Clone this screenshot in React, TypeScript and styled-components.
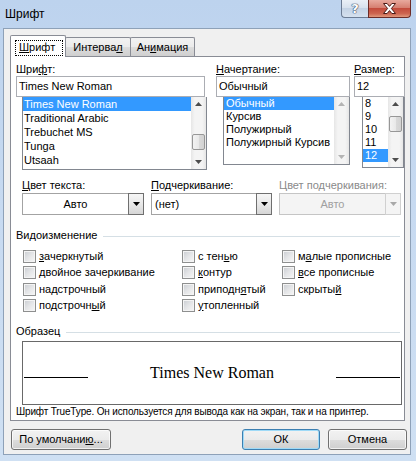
import styled, { createGlobalStyle } from "styled-components";

const GlobalStyle = createGlobalStyle`
  html, body {
    margin: 0;
    padding: 0;
  }
  body {
    font-family: "Liberation Sans", Arial, sans-serif;
    font-size: 11px;
    color: #000;
  }
  * {
    box-sizing: border-box;
  }
`;

const Window = styled.div`
  width: 416px;
  height: 461px;
  display: flex;
  flex-direction: column;
  overflow: hidden;
  background: linear-gradient(180deg, #bdd3ee 0%, #c7daf1 45%, #cfe0f3 100%);
`;

const TitleBar = styled.div`
  height: 28px;
  flex-shrink: 0;
  display: flex;
  align-items: flex-start;
`;

const Title = styled.div`
  flex: 1;
  padding-left: 5px;
  font-size: 12px;
  line-height: 28px;
`;

const CaptionButtons = styled.div`
  display: flex;
  margin-right: 5px;
`;

const HelpButton = styled.div`
  width: 27px;
  height: 18px;
  border: 1px solid #6b7c94;
  border-top: none;
  border-right: none;
  border-radius: 0 0 0 4px;
  background: linear-gradient(180deg, #eaf0f7 0%, #d8e2ee 45%, #c4d3e5 50%, #d5e1ef 100%);
  display: flex;
  align-items: center;
  justify-content: center;
  font: bold 13px "DejaVu Sans", sans-serif;
  color: #fff;
  text-shadow: 0 0 1px #2b3c58, 0 0 1px #2b3c58, 0 0 1px #2b3c58;
`;

const CloseButton = styled.div`
  width: 43px;
  height: 18px;
  border: 1px solid #6c2c27;
  border-top: none;
  border-radius: 0 0 4px 0;
  background: linear-gradient(180deg, #e8a99e 0%, #d67f71 45%, #c34b3c 50%, #cd6550 80%, #e0987c 100%);
  display: flex;
  align-items: center;
  justify-content: center;
`;

const Body = styled.div`
  flex: 1;
  margin: 0 5px 6px 3px;
  border: 1px solid #8ea1b8;
  background: #f0f0f0;
  display: flex;
  flex-direction: column;
  padding-top: 6px;
`;

const TabStrip = styled.div`
  height: 22px;
  margin: 0 5px 0 6px;
  display: flex;
  align-items: flex-end;
  position: relative;
  z-index: 1;
`;

const Tab = styled.div<{ $active?: boolean; $width: number }>`
  width: ${(p) => p.$width}px;
  margin-left: ${(p) => (p.$active ? 0 : -1)}px;
  border: 1px solid #898c95;
  border-bottom: none;
  border-radius: 2px 2px 0 0;
  display: flex;
  ${(p) =>
    p.$active
      ? `
    height: 22px;
    background: #fff;
    padding: 4px 2px 1px 4px;
  `
      : `
    height: 19px;
    margin-bottom: 1px;
    background: linear-gradient(180deg, #f2f2f2 0%, #ebebeb 50%, #dddddd 51%, #cfcfcf 100%);
    justify-content: center;
    line-height: 18px;
  `}
`;

const FocusRect = styled.span`
  flex: 1;
  border: 1px dotted #000;
  padding-left: 3px;
  line-height: 13px;
`;

const U = styled.span`
  text-decoration: underline;
`;

const Panel = styled.div`
  margin: -1px 5px 0 6px;
  height: 365px;
  border: 1px solid #898c95;
  background: #fff;
  padding: 6px 1px 0 5px;
  display: flex;
  flex-direction: column;
`;

const TopSection = styled.div`
  display: flex;
  align-items: flex-start;
  height: 107px;
`;

const Column = styled.div<{ $width: number; $offset?: number }>`
  width: ${(p) => p.$width}px;
  margin-left: ${(p) => p.$offset ?? 0}px;
  flex-shrink: 0;
  display: flex;
  flex-direction: column;
`;

const FieldLabel = styled.div<{ $disabled?: boolean }>`
  line-height: 13px;
  height: 13px;
  white-space: nowrap;
  color: ${(p) => (p.$disabled ? "#8a8a8a" : "#000")};
`;

const TextBox = styled.div<{ $width: number }>`
  width: ${(p) => p.$width}px;
  height: 21px;
  border: 1px solid #abadb3;
  padding-left: 2px;
  line-height: 19px;
  background: #fff;
`;

const ListBox = styled.div<{ $width: number; $height: number; $indent: number }>`
  width: ${(p) => p.$width}px;
  height: ${(p) => p.$height}px;
  margin-left: ${(p) => p.$indent}px;
  border: 1px solid #828790;
  border-top: none;
  background: #fff;
  display: flex;
  overflow: hidden;
`;

const ListItems = styled.div`
  flex: 1;
  display: flex;
  flex-direction: column;
  overflow: hidden;
`;

const ListItem = styled.div<{ $selected?: boolean; $h: number; $pad: number }>`
  height: ${(p) => p.$h}px;
  line-height: ${(p) => p.$h}px;
  padding-left: ${(p) => p.$pad}px;
  white-space: nowrap;
  flex-shrink: 0;
  background: ${(p) => (p.$selected ? "#3399ff" : "transparent")};
  color: ${(p) => (p.$selected ? "#fff" : "#000")};
`;

const ScrollBar = styled.div`
  width: 15px;
  display: flex;
  flex-direction: column;
  background: linear-gradient(90deg, #e6e6e6 0%, #f4f4f4 25%, #f4f4f4 75%, #e6e6e6 100%);
`;

const ScrollArrow = styled.div<{ $disabled?: boolean }>`
  height: 14px;
  display: flex;
  align-items: center;
  justify-content: center;
  color: ${(p) => (p.$disabled ? "#b4b4b4" : "#4d4d4d")};
`;

const ScrollTrack = styled.div`
  flex: 1;
  display: flex;
  flex-direction: column;
`;

const ScrollThumb = styled.div<{ $offset: number }>`
  margin: ${(p) => p.$offset}px 1px 0 1px;
  height: 16px;
  border: 1px solid #979797;
  border-radius: 2px;
  background: linear-gradient(90deg, #f3f3f3 0%, #e9e9e9 50%, #dadada 51%, #d2d2d2 100%);
`;

const ComboRow = styled.div`
  display: flex;
  gap: 7px;
  margin-top: 9px;
  padding-left: 6px;
`;

const ComboField = styled.div<{ $width: number }>`
  width: ${(p) => p.$width}px;
  display: flex;
  flex-direction: column;
  gap: 1px;
`;

const Combo = styled.div<{ $disabled?: boolean }>`
  height: 22px;
  border: 1px solid ${(p) => (p.$disabled ? "#c5c5c5" : "#a3a3a3")};
  background: ${(p) => (p.$disabled ? "#f4f4f4" : "#fff")};
  color: ${(p) => (p.$disabled ? "#a0a0a0" : "#000")};
  display: flex;
`;

const ComboText = styled.div<{ $center?: boolean }>`
  flex: 1;
  line-height: 20px;
  padding-left: ${(p) => (p.$center ? 0 : 3)}px;
  text-align: ${(p) => (p.$center ? "center" : "left")};
`;

const ComboArrow = styled.div<{ $disabled?: boolean }>`
  width: 16px;
  border: 1px solid ${(p) => (p.$disabled ? "#d0d0d0" : "#6f6f6f")};
  margin: -1px -1px -1px 0;
  background: ${(p) =>
    p.$disabled ? "#f4f4f4" : "linear-gradient(180deg, #f6f6f6 0%, #e8e8e8 50%, #d6d6d6 100%)"};
  color: ${(p) => (p.$disabled ? "#a8a8a8" : "#000")};
  display: flex;
  align-items: center;
  justify-content: center;
`;

const GroupHeader = styled.div<{ $top: number }>`
  display: flex;
  align-items: center;
  gap: 6px;
  height: 13px;
  margin: ${(p) => p.$top}px 3px 0 0;
  line-height: 13px;
`;

const GroupLine = styled.div`
  flex: 1;
  height: 1px;
  background: #d5dfe5;
  margin-top: 1px;
`;

const EffectsGrid = styled.div`
  display: grid;
  grid-template-columns: 159px 100px 1fr;
  grid-template-rows: 16px 17px 16px 16px;
  grid-auto-flow: column;
  margin-top: 8px;
  padding-left: 7px;
`;

const Effect = styled.label`
  display: flex;
  align-items: flex-start;
  gap: 3px;
  line-height: 13px;
  white-space: nowrap;
`;

const CheckBox = styled.span`
  width: 13px;
  height: 13px;
  flex-shrink: 0;
  border: 1px solid #8e8f8f;
  background: linear-gradient(135deg, #c9ccd1 0%, #e4e5e7 50%, #f7f7f7 100%);
  box-shadow: inset 0 0 0 1px #f4f4f4;
`;

const Preview = styled.div`
  width: 380px;
  height: 64px;
  margin: 3px 0 0 6px;
  border: 1px solid #696969;
  background: #fff;
  display: flex;
  align-items: center;
  padding: 0 1px;
`;

const PreviewRule = styled.div`
  width: 64px;
  height: 1px;
  background: #000;
  margin-top: 9px;
`;

const PreviewText = styled.div`
  flex: 1;
  text-align: center;
  font-family: "Liberation Serif", "Times New Roman", serif;
  font-size: 16px;
`;

const Note = styled.div`
  margin-top: 1px;
  font-size: 10px;
  letter-spacing: -0.15px;
  line-height: 12px;
  white-space: nowrap;
`;

const ButtonRow = styled.div`
  display: flex;
  margin: 8px 3px 0 7px;
`;

const Spacer = styled.div`
  flex: 1;
`;

const PushButton = styled.div<{ $width: number; $default?: boolean; $gap?: number }>`
  width: ${(p) => p.$width}px;
  height: 21px;
  margin-left: ${(p) => p.$gap ?? 0}px;
  border: 1px solid ${(p) => (p.$default ? "#3c7fb1" : "#707070")};
  border-radius: 3px;
  background: linear-gradient(180deg, #f2f2f2 0%, #ebebeb 50%, #dddddd 51%, #cfcfcf 100%);
  box-shadow: inset 0 0 0 1px ${(p) => (p.$default ? "#9fdaf7" : "rgba(255, 255, 255, 0.7)")};
  text-align: center;
  line-height: 19px;
  white-space: nowrap;
`;

const Triangle = ({ up = false }: { up?: boolean }) => (
  <svg width="7" height="4" viewBox="0 0 7 4">
    <path d={up ? "M0 4h7L3.5 0z" : "M0 0h7L3.5 4z"} fill="currentColor" />
  </svg>
);

const CloseGlyph = () => (
  <svg width="13" height="11" viewBox="0 0 13 11">
    <path
      d="M0.5 0.5h3.6L6.5 3.4 8.9 0.5h3.6L8.4 5.5l4.1 5h-3.6L6.5 7.6 4.1 10.5H0.5l4.1-5z"
      fill="#fff"
      stroke="#4a1a16"
      strokeWidth="1"
      strokeLinejoin="round"
    />
  </svg>
);

type ListProps = {
  items: string[];
  selected: number;
  width: number;
  height: number;
  indent: number;
  itemHeight: number;
  pad: number;
  thumb?: number;
};

const FontList = ({ items, selected, width, height, indent, itemHeight, pad, thumb }: ListProps) => (
  <ListBox $width={width} $height={height} $indent={indent}>
    <ListItems>
      {items.map((item, i) => (
        <ListItem key={item} $selected={i === selected} $h={itemHeight} $pad={pad}>
          {item}
        </ListItem>
      ))}
    </ListItems>
    <ScrollBar>
      <ScrollArrow $disabled={thumb === undefined}>
        <Triangle up />
      </ScrollArrow>
      <ScrollTrack>{thumb !== undefined && <ScrollThumb $offset={thumb} />}</ScrollTrack>
      <ScrollArrow $disabled={thumb === undefined}>
        <Triangle />
      </ScrollArrow>
    </ScrollBar>
  </ListBox>
);

const effects = [
  <><U>з</U>ачеркнутый</>,
  <><U>д</U>войное зачеркивание</>,
  <>надстрочный</>,
  <>подстрочн<U>ы</U>й</>,
  <>с тен<U>ь</U>ю</>,
  <><U>к</U>онтур</>,
  <>приподн<U>я</U>тый</>,
  <><U>у</U>топленный</>,
  <>м<U>а</U>лые прописные</>,
  <><U>в</U>се прописные</>,
  <>скрыты<U>й</U></>,
];

export default function App() {
  return (
    <>
      <GlobalStyle />
      <Window>
        <TitleBar>
          <Title>Шрифт</Title>
          <CaptionButtons>
            <HelpButton>?</HelpButton>
            <CloseButton>
              <CloseGlyph />
            </CloseButton>
          </CaptionButtons>
        </TitleBar>
        <Body>
          <TabStrip>
            <Tab $active $width={56}>
              <FocusRect>
                <U>Ш</U>рифт
              </FocusRect>
            </Tab>
            <Tab $width={66}>
              Интерва<U>л</U>
            </Tab>
            <Tab $width={65}>
              Ан<U>и</U>мация
            </Tab>
          </TabStrip>
          <Panel>
            <TopSection>
              <Column $width={191}>
                <FieldLabel>
                  Шри<U>ф</U>т:
                </FieldLabel>
                <TextBox $width={189}>Times New Roman</TextBox>
                <FontList
                  items={["Times New Roman", "Traditional Arabic", "Trebuchet MS", "Tunga", "Utsaah"]}
                  selected={0}
                  width={185}
                  height={73}
                  indent={6}
                  itemHeight={14}
                  pad={1}
                  thumb={23}
                />
              </Column>
              <Column $width={134} $offset={9}>
                <FieldLabel>
                  <U>Н</U>ачертание:
                </FieldLabel>
                <TextBox $width={134}>Обычный</TextBox>
                <FontList
                  items={["Обычный", "Курсив", "Полужирный", "Полужирный Курсив"]}
                  selected={0}
                  width={127}
                  height={68}
                  indent={7}
                  itemHeight={13}
                  pad={2}
                />
              </Column>
              <Column $width={51} $offset={4}>
                <FieldLabel>
                  <U>Р</U>азмер:
                </FieldLabel>
                <TextBox $width={51}>12</TextBox>
                <FontList
                  items={["8", "9", "10", "11", "12"]}
                  selected={4}
                  width={42}
                  height={71}
                  indent={8}
                  itemHeight={13}
                  pad={2}
                  thumb={5}
                />
              </Column>
            </TopSection>

            <ComboRow>
              <ComboField $width={122}>
                <FieldLabel>
                  <U>Ц</U>вет текста:
                </FieldLabel>
                <Combo>
                  <ComboText $center>Авто</ComboText>
                  <ComboArrow>
                    <Triangle />
                  </ComboArrow>
                </Combo>
              </ComboField>
              <ComboField $width={121}>
                <FieldLabel>
                  <U>П</U>одчеркивание:
                </FieldLabel>
                <Combo>
                  <ComboText>(нет)</ComboText>
                  <ComboArrow>
                    <Triangle />
                  </ComboArrow>
                </Combo>
              </ComboField>
              <ComboField $width={122}>
                <FieldLabel $disabled>Цвет подчеркивания:</FieldLabel>
                <Combo $disabled>
                  <ComboText $center>Авто</ComboText>
                  <ComboArrow $disabled>
                    <Triangle />
                  </ComboArrow>
                </Combo>
              </ComboField>
            </ComboRow>

            <GroupHeader $top={14}>
              Видоизменение
              <GroupLine />
            </GroupHeader>
            <EffectsGrid>
              {effects.map((label, i) => (
                <Effect key={i}>
                  <CheckBox />
                  <span>{label}</span>
                </Effect>
              ))}
            </EffectsGrid>

            <GroupHeader $top={10}>
              Образец
              <GroupLine />
            </GroupHeader>
            <Preview>
              <PreviewRule />
              <PreviewText>Times New Roman</PreviewText>
              <PreviewRule />
            </Preview>
            <Note>Шрифт TrueType. Он используется для вывода как на экран, так и на принтер.</Note>
          </Panel>

          <ButtonRow>
            <PushButton $width={100}>
              По умолчани<U>ю</U>...
            </PushButton>
            <Spacer />
            <PushButton $width={78} $default>
              ОК
            </PushButton>
            <PushButton $width={79} $gap={8}>
              Отмена
            </PushButton>
          </ButtonRow>
        </Body>
      </Window>
    </>
  );
}
